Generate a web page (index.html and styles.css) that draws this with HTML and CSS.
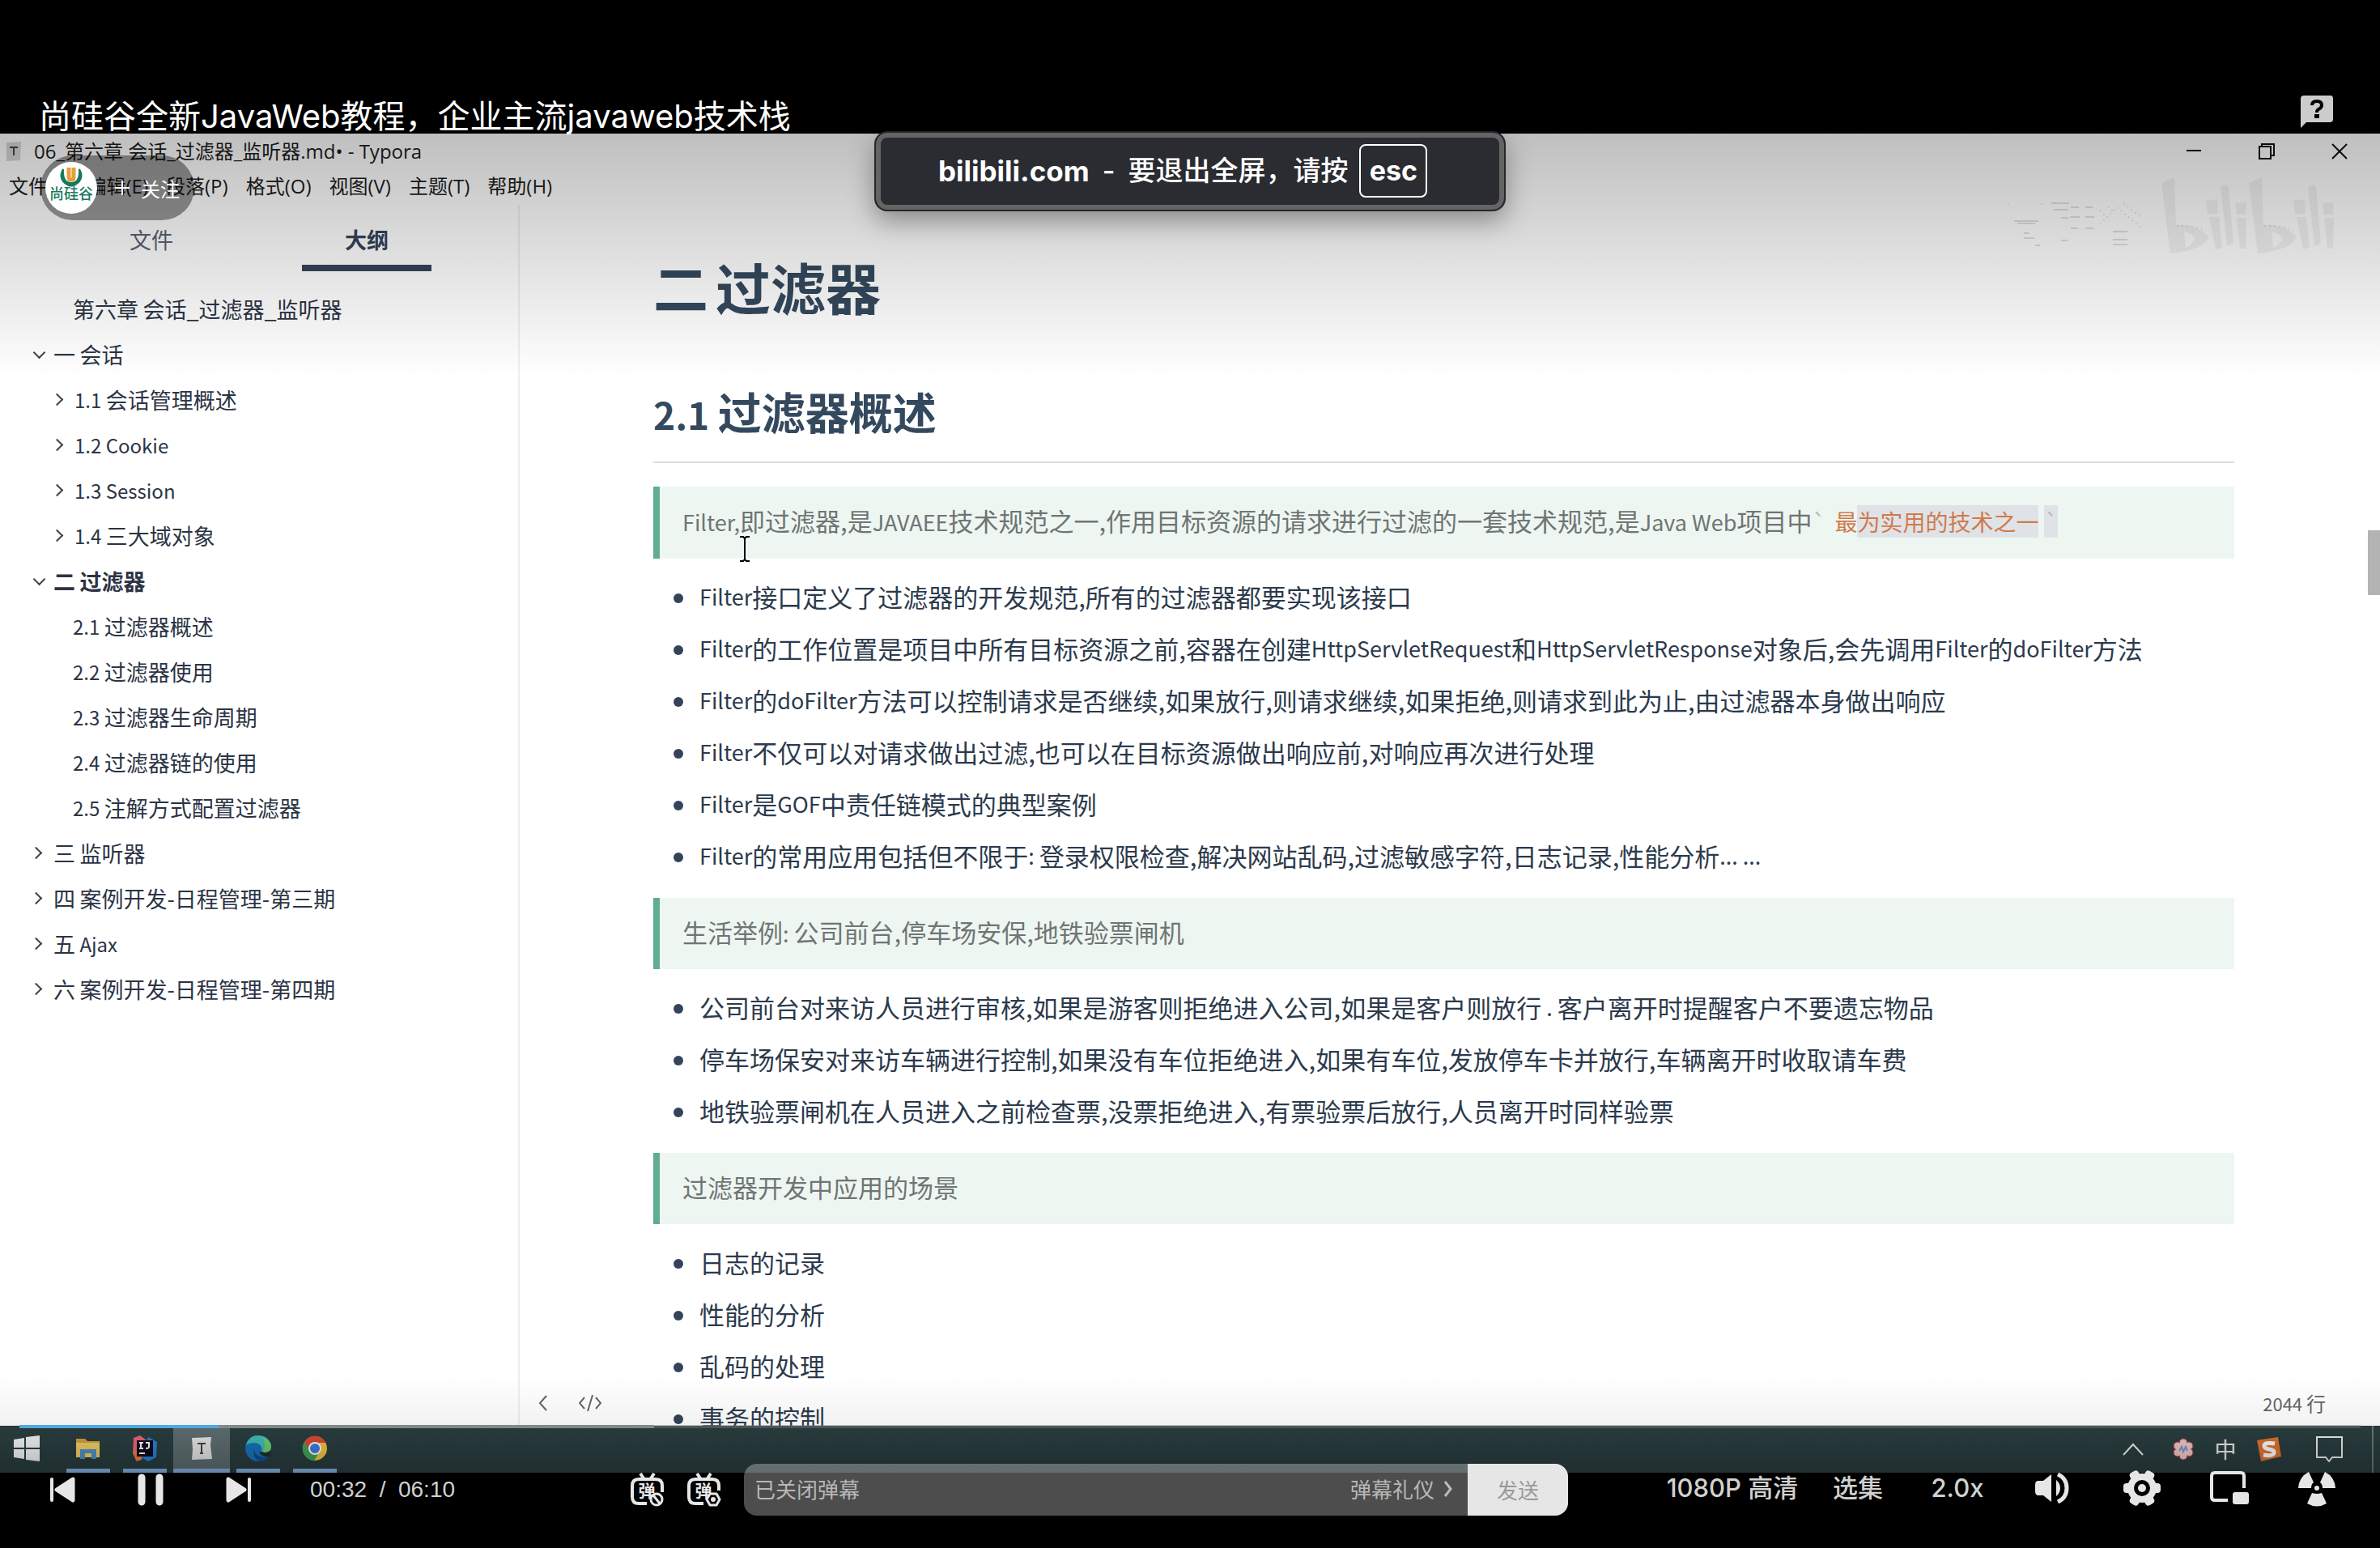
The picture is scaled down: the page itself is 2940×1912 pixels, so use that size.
FILE: index.html
```html
<!DOCTYPE html>
<html lang="zh-CN">
<head>
<meta charset="utf-8">
<meta name="viewport" content="width=device-width, initial-scale=1">
<title>尚硅谷全新JavaWeb教程</title>
<link rel="stylesheet" href="styles.css">
</head>
<body>
<div class="player">
  <header class="player-head">
    <h1 class="video-title">尚硅谷全新JavaWeb教程，企业主流javaweb技术栈</h1>
    <button class="help" aria-label="帮助">
      <svg width="40" height="40" viewBox="0 0 40 40"><path d="M4 0H37Q40 0 40 4V29Q40 33 36 33H7L0 40V4Q0 0 4 0Z" fill="#ccc"/><path d="M14 12Q14 7 20 7T26 12Q26 15 22 17Q20 18 20 21" fill="none" stroke="#000" stroke-width="4"/><rect x="17" y="23" width="6" height="5" fill="#000"/></svg>
    </button>
  </header>

  <main class="frame">
    <div class="titlebar">
      <svg class="doc-icon" width="22" height="26" viewBox="0 0 22 26"><path d="M2 2L20 1 19 24 2 25Z" fill="#d8d8d8"/><path d="M6 8H16M11 8V18" stroke="#444" stroke-width="2" fill="none"/></svg>
      <span class="doc-title">06_第六章 会话_过滤器_监听器.md• - Typora</span>
      <div class="win-buttons">
        <button aria-label="最小化"><svg width="20" height="20" viewBox="0 0 20 20"><path d="M1 9H19"/></svg></button>
        <button aria-label="还原"><svg width="20" height="20" viewBox="0 0 20 20"><path d="M1 4H15V19H1ZM4 4V1H19V15H15"/></svg></button>
        <button aria-label="关闭"><svg width="20" height="20" viewBox="0 0 20 20"><path d="M1 1L19 19M19 1L1 19"/></svg></button>
      </div>
    </div>
    <nav class="menubar">
      <button>文件(F)</button><button>编辑(E)</button><button>段落(P)</button><button>格式(O)</button><button>视图(V)</button><button>主题(T)</button><button>帮助(H)</button>
    </nav>

    <div class="workspace">
      <aside class="sidebar">
        <div class="tabs"><button class="tab">文件</button><button class="tab active">大纲</button></div>
        <ul class="outline">
          <li class="deep">第六章<span class="en"> </span>会话_过滤器_监听器</li>
          <li class="open">一<span class="en"> </span>会话</li>
          <li class="deep shut"><span class="en">1.1 </span>会话管理概述</li>
          <li class="deep shut"><span class="en">1.2 Cookie</span></li>
          <li class="deep shut"><span class="en">1.3 Session</span></li>
          <li class="deep shut"><span class="en">1.4 </span>三大域对象</li>
          <li class="open current">二<span class="en"> </span>过滤器</li>
          <li class="deep"><span class="en">2.1 </span>过滤器概述</li>
          <li class="deep"><span class="en">2.2 </span>过滤器使用</li>
          <li class="deep"><span class="en">2.3 </span>过滤器生命周期</li>
          <li class="deep"><span class="en">2.4 </span>过滤器链的使用</li>
          <li class="deep"><span class="en">2.5 </span>注解方式配置过滤器</li>
          <li class="shut">三<span class="en"> </span>监听器</li>
          <li class="shut">四<span class="en"> </span>案例开发-日程管理-第三期</li>
          <li class="shut">五<span class="en"> Ajax</span></li>
          <li class="shut">六<span class="en"> </span>案例开发-日程管理-第四期</li>
        </ul>
      </aside>

      <section class="editor">
        <article class="doc">
          <h2 class="chapter">二<span class="en"> </span>过滤器</h2>
          <h3 class="section"><span class="en">2.1 </span>过滤器概述</h3>
          <blockquote><span class="en">Filter,</span>即过滤器,是<span class="en">JAVAEE</span>技术规范之一,作用目标资源的请求进行过滤的一套技术规范,是<span class="en">Java Web</span>项目中<span class="tick">`</span><code>最<mark>为实用的技术之一</mark></code><mark class="tick">`</mark></blockquote>
          <ul>
            <li><span class="en">Filter</span>接口定义了过滤器的开发规范,所有的过滤器都要实现该接口</li>
            <li><span class="en">Filter</span>的工作位置是项目中所有目标资源之前,容器在创建<span class="en">HttpServletRequest</span>和<span class="en">HttpServletResponse</span>对象后,会先调用<span class="en">Filter</span>的<span class="en">doFilter</span>方法</li>
            <li><span class="en">Filter</span>的<span class="en">doFilter</span>方法可以控制请求是否继续,如果放行,则请求继续,如果拒绝,则请求到此为止,由过滤器本身做出响应</li>
            <li><span class="en">Filter</span>不仅可以对请求做出过滤,也可以在目标资源做出响应前,对响应再次进行处理</li>
            <li><span class="en">Filter</span>是<span class="en">GOF</span>中责任链模式的典型案例</li>
            <li><span class="en">Filter</span>的常用应用包括但不限于<span class="en">: </span>登录权限检查,解决网站乱码,过滤敏感字符,日志记录,性能分析<span class="en">... ...</span></li>
          </ul>
          <blockquote>生活举例<span class="en">: </span>公司前台,停车场安保,地铁验票闸机</blockquote>
          <ul>
            <li>公司前台对来访人员进行审核,如果是游客则拒绝进入公司,如果是客户则放行<span class="en"> . </span>客户离开时提醒客户不要遗忘物品</li>
            <li>停车场保安对来访车辆进行控制,如果没有车位拒绝进入,如果有车位,发放停车卡并放行,车辆离开时收取请车费</li>
            <li>地铁验票闸机在人员进入之前检查票,没票拒绝进入,有票验票后放行,人员离开时同样验票</li>
          </ul>
          <blockquote>过滤器开发中应用的场景</blockquote>
          <ul>
            <li>日志的记录</li>
            <li>性能的分析</li>
            <li>乱码的处理</li>
            <li>事务的控制</li>
          </ul>
        </article>
        <div class="editor-foot">
          <button aria-label="收起侧栏"><svg width="12" height="20" viewBox="0 0 12 20"><path d="M10 1L2 10L10 19"/></svg></button>
          <button aria-label="源代码模式"><svg width="28" height="20" viewBox="0 0 28 20"><path d="M7 3L1 10L7 17M21 3L27 10L21 17M17 0L11 20"/></svg></button>
          <span class="lines"><span class="en">2044 </span>行</span>
        </div>
        <div class="scroll-thumb"></div>
        <svg class="caret" width="12" height="32" viewBox="0 0 12 32"><path d="M0 1H4L6 3 8 1H12M6 3V29M0 31H4L6 29 8 31H12" fill="none" stroke="#000" stroke-width="2"/></svg>
      </section>
    </div>

    <div class="taskbar">
      <button class="task start" aria-label="开始"><svg width="32" height="32" viewBox="0 0 32 32"><path d="M0 5L13 3V15H0ZM15 2L32 0V15H15ZM0 17H13V29L0 27ZM15 17H32V32L15 30Z" fill="#f4f6f6"/></svg></button>
      <button class="task on" aria-label="文件管理器"><svg width="32" height="32" viewBox="0 0 32 32"><path d="M1 4H12L15 7H30V27H1Z" fill="#d9a336"/><path d="M1 9H30V27H1Z" fill="#f4d068"/><path d="M6 29V17H26V29H20V22H12V29Z" fill="#4d93c4"/></svg></button>
      <button class="task on" aria-label="IntelliJ IDEA"><svg width="32" height="32" viewBox="0 0 32 32"><path d="M2 3L10 0 18 6 12 30 6 32 1 22Z" fill="#f0657c"/><path d="M20 2L31 8 30 27 20 32 10 26Z" fill="#2583d6"/><path d="M1 20L8 18 12 29 5 31Z" fill="#f0803a"/><rect x="6" y="6" width="20" height="20" fill="#12091c"/><path d="M9 9H14M11 9V16M9 16H14M17 9H21V14Q21 16 17 16M9 22H16" stroke="#fff" stroke-width="2" fill="none"/></svg></button>
      <button class="task on active" aria-label="Typora"><svg width="32" height="32" viewBox="0 0 32 32"><path d="M4 3L28 2 27 12 29 29 4 30 5 17Z" fill="#e8e8e8"/><path d="M11 10H21M16 10V22M14 22H18" stroke="#444" stroke-width="2" fill="none"/></svg></button>
      <button class="task on" aria-label="Edge"><svg width="32" height="32" viewBox="0 0 32 32"><circle cx="16" cy="16" r="16" fill="#1873bd"/><path d="M1 12C3 3 10 0 16 0C26 0 32 7 32 14C32 20 26 23 20 20C22 15 18 9 11 9Q4 9 1 12Z" fill="#42bfb8"/><path d="M22 2Q32 7 32 14Q31 21 22 21Q26 12 22 2Z" fill="#6fd36d"/><path d="M11 16Q12 27 25 27Q30 26 31 22L28 28 22 32H18Q8 28 11 16Z" fill="#14508f"/><path d="M20 20Q27 23 32 18V25Q23 29 17 21Z" fill="#20302f"/></svg></button>
      <button class="task on" aria-label="Chrome"><svg width="32" height="32" viewBox="0 0 32 32"><circle cx="16" cy="16" r="15" fill="#f6c640"/><path d="M3 8A15 15 0 0 1 29 8L29 9H16L9 19Z" fill="#de4a38"/><path d="M3 8A15 15 0 0 0 15 31L22 20 10 19Z" fill="#3ea55a"/><circle cx="16" cy="16" r="8" fill="#fff"/><circle cx="16" cy="16" r="6" fill="#3f7de0"/></svg></button>
      <div class="tray">
        <svg width="26" height="16" viewBox="0 0 26 16"><path d="M1 15L13 2 25 15" fill="none" stroke="#eee" stroke-width="2"/></svg>
        <svg width="30" height="30" viewBox="0 0 30 30"><g fill="#f4c4c4" stroke="#a83c3c" stroke-width="1"><circle cx="15" cy="7" r="5"/><circle cx="22" cy="11" r="5"/><circle cx="22" cy="19" r="5"/><circle cx="15" cy="23" r="5"/><circle cx="8" cy="19" r="5"/><circle cx="8" cy="11" r="5"/></g><circle cx="15" cy="15" r="9" fill="#f4cccc"/><path d="M10 17L13 12 15 18 18 12 20 17" fill="none" stroke="#7d93c8" stroke-width="2"/></svg>
        <span class="ime">中</span>
        <svg width="32" height="32" viewBox="0 0 32 32"><path d="M1 5Q14 3 27 1L31 25Q18 28 6 31Z" fill="#e0742f"/><path d="M23 9Q10 7 10 12Q10 15 16 16Q23 17 22 21Q20 25 9 23" fill="none" stroke="#fff" stroke-width="5"/></svg>
        <svg width="33" height="32" viewBox="0 0 33 32"><path d="M1 1H32V26H20L16 31 12 26H1Z" fill="none" stroke="#eee" stroke-width="2"/></svg>
      </div>
    </div>

    <svg class="watermark" width="410" height="98" viewBox="0 0 410 98">
      <g fill="#000" fill-opacity=".05">
        <path d="M193 8L209 1 211 60Q236 58 251 74 249 90 204 95ZM221 68L223 88Q233 84 234 76Q230 70 221 68Z" fill-rule="evenodd"/>
        <path d="M248 30L262 28 263 46 250 46ZM252 50L264 50 268 88 260 90ZM266 13Q272 8 276 12L282 82 274 86ZM284 33L298 32 297 47 286 47ZM286 51L298 51 297 89 290 89Z"/>
        <path d="M301 8L317 1 319 60Q344 58 359 74 357 90 312 95ZM329 68L331 88Q341 84 342 76Q338 70 329 68Z" fill-rule="evenodd"/>
        <path d="M356 30L370 28 371 46 358 46ZM360 50L372 50 376 88 368 90ZM374 13Q380 8 384 12L390 82 382 86ZM392 33L406 32 405 47 394 47ZM394 51L406 51 405 89 398 89Z"/>
      </g>
      <path d="M11 55H41M15 58H37M23 70H30M23 76H36M57 33H79M60 41H78M69 51H78M80 50H92M81 38H91M99 38H108M99 50H110M81 64H90M99 64H109M69 79H77M133 68H151M133 78H151M133 84H151M37 85H43" stroke="#000" stroke-opacity=".12" stroke-width="2"/>
      <path d="M117 59L138 38 169 64M117 42L125 50M127 37L134 44M146 33L168 50M3 34L8 38M45 33V38M212 61Q232 60 248 67M320 61Q340 60 356 67" fill="none" stroke="#000" stroke-opacity=".1" stroke-width="2" stroke-dasharray="2 4"/>
    </svg>
    <div class="shade shade-top"></div>
    <div class="shade shade-bottom"></div>
    <button class="follow">
      <svg width="64" height="64" viewBox="0 0 64 64"><circle cx="32" cy="32" r="32" fill="#fff"/><path d="M22 9Q17 17 22 24Q32 35 42 24Q47 17 42 9Q43 26 32 26Q21 26 22 9Z" fill="#18795f" stroke="#18795f" stroke-width="2"/><path d="M29 7V19Q29 22 32 22T35 19V7" fill="none" stroke="#e5a03a" stroke-width="5"/><text x="32" y="46" text-anchor="middle" class="brand">尚硅谷</text></svg>
      <svg width="18" height="18" viewBox="0 0 18 18"><path d="M0 9H18M9 0V18" stroke="#fff" stroke-width="2"/></svg>
      <span>关注</span>
    </button>
    <div class="progress" role="progressbar" aria-valuenow="8" aria-label="播放进度"><div class="buffered" style="width:27.1%"></div><div class="played" style="width:8.5%"></div></div>
  </main>

  <footer class="controls">
    <div class="transport">
      <button aria-label="上一个"><svg width="32" height="32" viewBox="0 0 32 32"><path d="M2 3V29" stroke="#e6e6e6" stroke-width="4" stroke-linecap="round"/><path d="M28 3L8 16 28 29Z" fill="#e6e6e6" stroke="#e6e6e6" stroke-width="5" stroke-linejoin="round"/></svg></button>
      <button aria-label="暂停"><svg width="32" height="40" viewBox="0 0 32 40"><path d="M5 5V35M27 5V35" stroke="#e6e6e6" stroke-width="9" stroke-linecap="round"/></svg></button>
      <button aria-label="下一个"><svg width="32" height="32" viewBox="0 0 32 32"><path d="M30 3V29" stroke="#e6e6e6" stroke-width="4" stroke-linecap="round"/><path d="M4 3L24 16 4 29Z" fill="#e6e6e6" stroke="#e6e6e6" stroke-width="5" stroke-linejoin="round"/></svg></button>
      <span class="time">00:32 &nbsp;/&nbsp; 06:10</span>
    </div>
    <div class="danmu">
      <button aria-label="开启弹幕"><svg width="42" height="42" viewBox="0 0 42 42"><path d="M12 1L16 7M29 1L25 7M20 38H10Q2 38 2 30V16Q2 8 10 8H31Q39 8 39 16V24" fill="none" stroke="#e6e6e6" stroke-width="4"/><text x="20" y="30" text-anchor="middle" class="dan">弹</text><circle cx="32" cy="33" r="7" fill="#000" stroke="#e6e6e6" stroke-width="3"/><path d="M28 28L36 38" stroke="#e6e6e6" stroke-width="3"/></svg></button>
      <button aria-label="弹幕设置"><svg width="42" height="42" viewBox="0 0 42 42"><path d="M12 1L16 7M29 1L25 7M20 38H10Q2 38 2 30V16Q2 8 10 8H31Q39 8 39 16V22" fill="none" stroke="#e6e6e6" stroke-width="4"/><text x="20" y="30" text-anchor="middle" class="dan">弹</text><path d="M28 26H36L40 33 36 40H28L24 33Z" fill="#000" stroke="#e6e6e6" stroke-width="3" stroke-linejoin="round"/><circle cx="32" cy="33" r="3" fill="#e6e6e6"/></svg></button>
      <form class="send-box">
        <input type="text" placeholder="已关闭弹幕" aria-label="弹幕">
        <a href="#" class="manners">弹幕礼仪 <svg width="12" height="20" viewBox="0 0 12 20"><path d="M2 1L9 10L2 19" fill="none" stroke="#bbb" stroke-width="3"/></svg></a>
        <button type="button" class="send">发送</button>
      </form>
    </div>
    <div class="options">
      <button>1080P 高清</button>
      <button>选集</button>
      <button>2.0x</button>
      <button aria-label="音量"><svg width="42" height="40" viewBox="0 0 42 40"><path d="M4 11H10L20 3V37L10 29H4Q0 29 0 24V16Q0 11 4 11Z" fill="#e6e6e6"/><path d="M26 10Q31 14 31 20T26 30Z" fill="#e6e6e6"/><path d="M28 3Q39 8 39 20T28 37" fill="none" stroke="#e6e6e6" stroke-width="5"/></svg></button>
      <button aria-label="设置"><svg width="46" height="46" viewBox="0 0 46 46"><g fill="#e6e6e6"><circle cx="23" cy="23" r="18"/><rect x="0" y="17" width="46" height="12" rx="4"/><rect x="0" y="17" width="46" height="12" rx="4" transform="rotate(60 23 23)"/><rect x="0" y="17" width="46" height="12" rx="4" transform="rotate(120 23 23)"/></g><circle cx="23" cy="23" r="7.5" fill="none" stroke="#000" stroke-width="5"/></svg></button>
      <button aria-label="小窗播放"><svg width="48" height="42" viewBox="0 0 48 42"><path d="M22 36H6Q2 36 2 32V6Q2 2 6 2H38Q42 2 42 6V21" fill="none" stroke="#e6e6e6" stroke-width="4"/><rect x="28" y="26" width="20" height="15" rx="3" fill="#e6e6e6"/></svg></button>
      <button aria-label="退出全屏"><svg width="46" height="46" viewBox="0 0 46 46"><g fill="#e6e6e6"><path d="M17 29Q23 31 29 29L35 42Q23 49 11 42Z"/><path d="M0 23Q1 9 13 3L19 16Q16 18 16 23Z"/><path d="M46 23Q45 9 33 3L27 16Q30 18 30 23Z"/><circle cx="23" cy="23" r="3"/></g></svg></button>
    </div>
  </footer>

  <div class="toast" role="status"><strong>bilibili.com</strong><span class="dash">-</span><span>要退出全屏，请按</span><kbd>esc</kbd></div>
</div>
</body>
</html>
```
FILE: styles.css
```css
* { box-sizing: border-box; }

body {
  margin: 0;
  background: #000;
  color: #fff;
  font-family: "Noto Sans CJK SC", "Noto Sans", sans-serif;
}

button {
  margin: 0;
  padding: 0;
  border: 0;
  background: none;
  color: inherit;
  font: inherit;
  display: flex;
  align-items: center;
  justify-content: center;
}

svg { display: block; flex: none; }

ul { margin: 0; padding: 0; list-style: none; }

.player { position: relative; min-height: 100vh; }

/* player header */
.player-head {
  position: relative;
  z-index: 2;
  display: flex;
  justify-content: space-between;
  align-items: flex-end;
  height: 165px;
  padding: 0 58px 0 48px;
}

.video-title {
  margin: 0;
  font: 400 40px/42px Inter, "Noto Sans CJK SC", sans-serif;
}

.help { margin-bottom: 7px; }

/* recorded desktop */
.frame {
  position: relative;
  display: flex;
  flex-direction: column;
  aspect-ratio: 16 / 9;
  overflow: hidden;
  background: #fff;
  color: #1d1d1d;
}

.titlebar, .menubar {
  display: flex;
  align-items: center;
  height: 44px;
  flex: none;
  font-family: "Open Sans", "Noto Sans CJK SC", sans-serif;
  font-size: 24px;
  line-height: 32px;
}

.titlebar { gap: 14px; padding: 0 40px 0 6px; }

.win-buttons { display: flex; gap: 70px; margin-left: auto; }
.win-buttons svg { fill: none; stroke: #111; stroke-width: 2; }

.menubar { gap: 22px; padding: 0 0 2px 11px; }

.workspace { display: flex; flex: 1; min-height: 0; }

.sidebar {
  flex: none;
  width: 642px;
  border-right: 2px solid #eee;
  color: #2c3444;
  font-size: 27px;
}

.sidebar .en { font-size: 24px; white-space: pre; }

.tabs { display: flex; padding: 0 54px; }

.tab {
  position: relative;
  flex: 1;
  height: 82px;
  padding-top: 2px;
  color: #5c6270;
}

.tab.active { color: #34435a; font-weight: 700; }

.tab.active::after {
  content: "";
  position: absolute;
  bottom: 0;
  left: 20%;
  right: 20%;
  height: 8px;
  background: #34435a;
}

.outline { margin-top: 18px; }

.outline li {
  display: flex;
  align-items: center;
  height: 56px;
  padding-left: 39px;
}

.outline .deep { padding-left: 65px; }

.outline li::before {
  content: "";
  width: 9px;
  height: 9px;
  margin-right: 16px;
}

.outline .open::before {
  border: solid #444;
  border-width: 0 2px 2px 0;
  transform: translate(4px, -2px) rotate(45deg);
}

.outline .shut::before {
  border: solid #444;
  border-width: 2px 2px 0 0;
  transform: rotate(45deg);
}

.outline .current { font-weight: 700; }

.editor { position: relative; flex: 1; overflow: hidden; }

.doc {
  padding: 51px 180px 0 165px;
  color: #2c3a4c;
  font-size: 31px;
  line-height: 64px;
}

.doc .en { font-size: 27px; line-height: 32px; white-space: pre; }

.chapter { margin: 0; color: #34495e; font-size: 68px; line-height: 100px; }
.chapter .en { font-size: 40px; }

.section {
  margin: 64px 0 29px;
  padding-bottom: 22px;
  border-bottom: 2px solid #ddd;
  color: #34495e;
  font-size: 54px;
  line-height: 80px;
}

.doc .section .en { font-size: 46px; }

.doc blockquote {
  margin: 18px 0 17px;
  padding: 10px 28px 14px;
  border-left: 8px solid #5fae92;
  background: #eef6f2;
  color: #6f7573;
}

.doc code {
  padding-left: 11px;
  color: #d07a4c;
  font: inherit;
  font-size: 28px;
}

.doc mark { background: #dfe3e8; color: inherit; }
.doc .tick { color: #b4bbb8; font-size: 28px; }
.doc code + mark { margin-left: 7px; }

.doc li {
  display: flex;
  align-items: center;
  height: 64px;
  padding: 0 0 4px 25px;
  white-space: nowrap;
}

.doc li::before {
  content: "";
  width: 12px;
  height: 12px;
  margin: 4px 20px 0 0;
  border-radius: 50%;
  background: #34435a;
}

.doc li .en { line-height: 64px; }

.editor-foot {
  position: absolute;
  left: 0;
  right: 0;
  bottom: 0;
  display: flex;
  align-items: center;
  gap: 38px;
  height: 56px;
  padding: 0 67px 0 23px;
  color: #666;
  font-size: 24px;
}

.editor-foot svg { fill: none; stroke: #666; stroke-width: 2; }
.editor-foot .en { font-size: 22px; }
.lines { margin-left: auto; }

.scroll-thumb {
  position: absolute;
  top: 402px;
  right: 0;
  width: 15px;
  height: 80px;
  background: #b3b3b3;
}

.caret { position: absolute; top: 409px; left: 272px; }

.taskbar {
  display: flex;
  flex: none;
  height: 58px;
  background: #2a3e40;
  border-right: 8px solid #2a3e40;
}

.task { width: 70px; border-bottom: 5px solid transparent; padding-top: 4px; }
.task.start { width: 66px; margin-right: 8px; }
.task.on { background: linear-gradient(#86b1e2, #86b1e2) bottom / 54px 5px no-repeat border-box; }
.task.active { background: linear-gradient(#86b1e2, #86b1e2) bottom / 70px 5px no-repeat border-box #5f6f72; }

.tray {
  display: grid;
  grid-template-columns: 66px 58px 46px 62px 86px;
  align-items: center;
  justify-items: center;
  margin-left: auto;
  padding-right: 10px;
  border-right: 2px solid #6a7778;
  color: #eee;
}

.ime { font-size: 27px; line-height: 32px; }

/* overlays on the picture */
.shade { position: absolute; left: 0; right: 0; pointer-events: none; }
.shade-top { top: 0; height: 300px; background: linear-gradient(rgba(0, 0, 0, .25), rgba(0, 0, 0, 0)); }
.shade-bottom { bottom: 0; height: 120px; background: linear-gradient(rgba(0, 0, 0, 0), rgba(0, 0, 0, .05) 50%, rgba(0, 0, 0, .25)); }

.watermark { position: absolute; top: 53px; right: 53px; }

.follow {
  position: absolute;
  top: 27px;
  left: 50px;
  width: 190px;
  height: 80px;
  padding-left: 6px;
  justify-content: flex-start;
  border-radius: 40px;
  background: rgba(0, 0, 0, .4);
  color: #fff;
  font-size: 24px;
}

.follow svg + svg { margin: 0 14px 0 22px; }
.brand { fill: #18795f; font-size: 18px; font-weight: 500; }

.progress {
  position: absolute;
  bottom: 55px;
  left: 24px;
  right: 24px;
  height: 4px;
  background: rgba(130, 130, 130, .4);
}

.progress div { position: absolute; inset: 0 auto 0 0; }
.buffered { background: #828988; }
.played { background: #4fa8e0; }

/* control bar */
.controls {
  position: relative;
  display: flex;
  align-items: center;
  height: 64px;
  margin-top: -11px;
  padding: 0 24px 0 59px;
  color: #d0d0d0;
}

.transport { display: flex; align-items: center; gap: 70px; width: 720px; flex: none; }
.transport button { width: 38px; }
.time { font: 28px/32px "Liberation Sans", sans-serif; }

.danmu { display: flex; align-items: center; gap: 28px; flex: 1; margin-right: 111px; }
.dan { fill: #e6e6e6; font-size: 21px; font-weight: 700; }

.send-box {
  display: flex;
  flex: 1;
  align-items: center;
  height: 64px;
  overflow: hidden;
  border-radius: 16px;
  background: rgba(255, 255, 255, .3);
  color: #b8b8b8;
  font-size: 26px;
}

.send-box input {
  flex: 1;
  min-width: 0;
  height: 64px;
  padding: 0 13px 2px;
  border: 0;
  background: none;
  color: inherit;
  font: inherit;
}

.send-box input::placeholder { color: #b8b8b8; }

.manners {
  display: flex;
  align-items: center;
  gap: 11px;
  margin-right: 18px;
  padding-bottom: 2px;
  color: inherit;
  text-decoration: none;
}

.send { width: 124px; height: 64px; background: #e6e6e6; color: #999; }

.options {
  display: grid;
  grid-template-columns: 184px 126px 120px 114px 108px 108px 108px;
  padding-bottom: 4px;
  font: 500 31px/40px Inter, "Noto Sans CJK SC", sans-serif;
}

/* fullscreen notice */
.toast {
  position: absolute;
  z-index: 3;
  top: 162px;
  left: 50%;
  display: flex;
  align-items: center;
  width: 780px;
  height: 99px;
  padding: 0 0 2px 77px;
  border: 2px solid #24272c;
  border-radius: 16px;
  background: #2a2c31;
  box-shadow: inset 0 0 0 6px #646464, 0 12px 32px rgba(0, 0, 0, .35);
  font: 500 34px/48px Inter, "Noto Sans CJK SC", sans-serif;
  transform: translateX(-50%);
}

.toast strong { font-size: 35px; font-weight: 700; }
.dash { margin: 0 16px; }

.toast kbd {
  display: flex;
  align-items: center;
  justify-content: center;
  width: 84px;
  height: 66px;
  margin-left: 14px;
  border: 2px solid #fff;
  border-radius: 8px;
  font: inherit;
  font-weight: 700;
}
```
